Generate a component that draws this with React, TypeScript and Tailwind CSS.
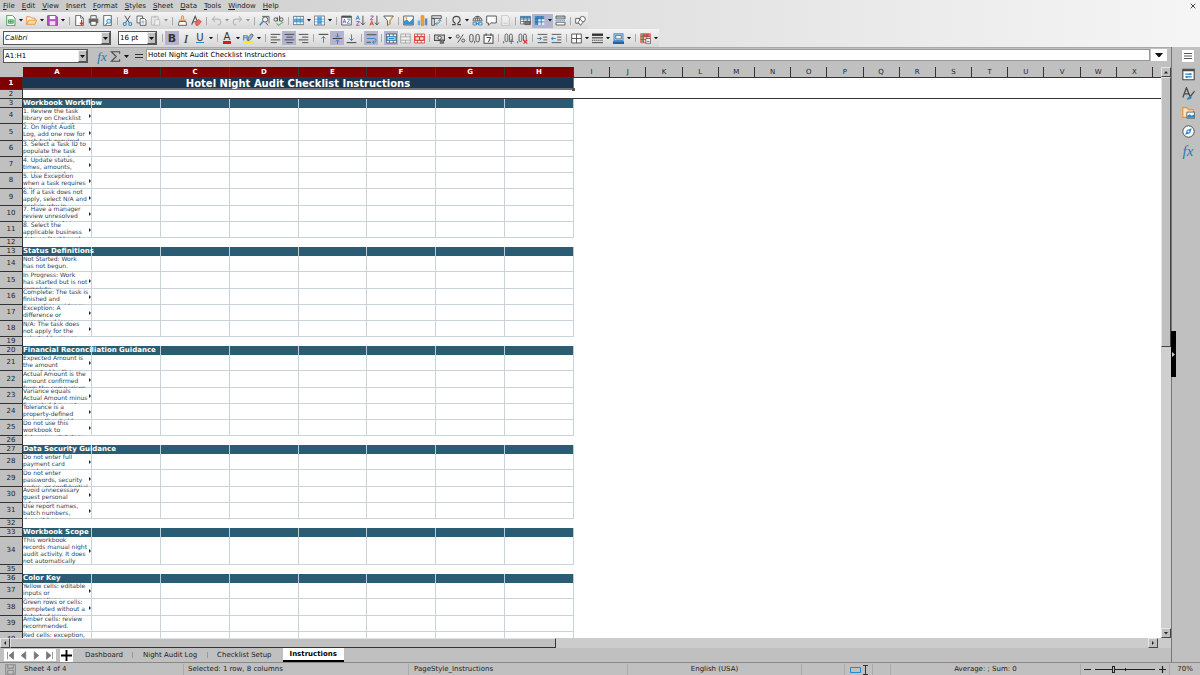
import { Fragment, useState, type ReactNode } from 'react';
import { clsx } from 'clsx';

const ink = '#4a4a4a';
const blue = '#2b88c8';
const red = '#d8322a';

const icons: Record<string, ReactNode> = {
  new: (
    <>
      <path d="M2.5.5h8l4 4v11h-12z" fill="#fff" stroke="#3f9b57" strokeWidth="1.4" />
      <path d="M5 7h7v5H5zM5 9.5h7M8.5 7v5" fill="#b8e6c1" stroke="#3f9b57" strokeWidth="1.2" />
    </>
  ),
  open: (
    <>
      <path d="M1 13.5v-11h5l2 2h5v3" fill="#fdf1df" stroke="#e8913a" strokeWidth="1.3" />
      <path d="M1 13.5l3-6h11.5l-2.5 6z" fill="#fbd9a6" stroke="#e8913a" strokeWidth="1.3" />
    </>
  ),
  save: (
    <>
      <path d="M1 1h12l2 2v12H1z" fill="#b658c4" stroke="#8d3a9c" strokeWidth="1.4" />
      <path d="M4 1.5h8V6H4z" fill="#fff" />
      <path d="M4 9h8v6H4z" fill="#f0dcf3" />
    </>
  ),
  pdf: (
    <>
      <path d="M2.5.5h7l4 4v11h-11z" fill="#fff" stroke={ink} strokeWidth="1.2" />
      <path d="M9.5.5v4h4" fill="none" stroke={ink} />
      <path d="M11 7v6M8.5 11l2.5 3 2.5-3" fill="none" stroke={red} strokeWidth="1.7" />
    </>
  ),
  print: (
    <>
      <path d="M4 5V1h8v4" fill="#fff" stroke={ink} strokeWidth="1.3" />
      <path d="M1 5h14v7H1z" fill="#6a6a6a" />
      <path d="M4 9h8v6H4z" fill="#fff" stroke={ink} strokeWidth="1.3" />
    </>
  ),
  preview: (
    <>
      <path d="M2.5.5h11v15h-11z" fill="#fff" stroke={ink} strokeWidth="1.2" />
      <circle cx="10" cy="9" r="3" fill="#d8ecf8" stroke={blue} strokeWidth="1.4" />
      <path d="M8 11.5l-3 3" stroke={blue} strokeWidth="1.6" />
    </>
  ),
  cut: (
    <>
      <path d="M4 1l6.5 10M12 1L5.5 11" stroke={ink} strokeWidth="1.4" />
      <circle cx="4" cy="13" r="2.2" fill="none" stroke={blue} strokeWidth="1.5" />
      <circle cx="12" cy="13" r="2.2" fill="none" stroke={blue} strokeWidth="1.5" />
    </>
  ),
  copy: (
    <>
      <path d="M1.5 1.5h8v10h-8z" fill="#fff" stroke={ink} strokeWidth="1.2" />
      <path d="M6 5h6l2.5 2.5V15H6z" fill="#fff" stroke={ink} strokeWidth="1.2" />
      <path d="M8 9h4M8 11.5h4" stroke={blue} />
    </>
  ),
  paste: (
    <>
      <path d="M2 2.5h10v12H2z" fill="#e8e8e8" stroke="#888" strokeWidth="1.2" />
      <path d="M5 1h4v3H5z" fill="#999" />
      <path d="M7 7h7v8H7z" fill="#fff" stroke="#888" />
    </>
  ),
  clone: (
    <>
      <path d="M6.5 6V2.5a1.5 1.5 0 013 0V6" fill="#f7d4a8" stroke="#c98542" strokeWidth="1.2" />
      <path d="M3 6.5h10V9H3z" fill="#e89b5a" />
      <path d="M3 9.5h10l1 5.5H2z" fill="#fff" stroke={ink} strokeWidth="1.2" />
    </>
  ),
  clear: (
    <>
      <path d="M1 14L6 2l4 9" fill="none" stroke={ink} strokeWidth="1.6" />
      <path d="M3 10h5" stroke={ink} strokeWidth="1.4" />
      <path d="M6.5 12L11 6.5l4 3-4.5 5.5h-3z" fill="#ef6a62" stroke={red} />
    </>
  ),
  undo: <path d="M6 2L2 6l4 4M2 6h8a4 4 0 010 8.5" fill="none" stroke="#8d8d8d" strokeWidth="1.5" />,
  redo: <path d="M10 2l4 4-4 4M14 6H6a4 4 0 000 8.5" fill="none" stroke="#8d8d8d" strokeWidth="1.5" />,
  find: (
    <>
      <path d="M4.5 2h10v10" fill="#fff" stroke={ink} strokeWidth="1.2" />
      <circle cx="9" cy="6.5" r="3.8" fill="#e6f2fa" stroke={ink} strokeWidth="1.3" />
      <path d="M6 9.5L1 15" stroke={blue} strokeWidth="2" />
      <path d="M10 11l3 4" stroke={ink} strokeWidth="1.3" />
    </>
  ),
  spell: (
    <>
      <circle cx="4" cy="6.5" r="2.5" fill="none" stroke={ink} strokeWidth="1.3" />
      <path d="M6.5 3.5V9M9.5 1v8" stroke={ink} strokeWidth="1.3" />
      <circle cx="12" cy="6.5" r="2.5" fill="none" stroke={ink} strokeWidth="1.3" />
      <path d="M5 12l3 3 7-5" fill="none" stroke="#4bb36a" strokeWidth="1.5" />
    </>
  ),
  rows: (
    <>
      <path d="M.5 2h15v12H.5z" fill="#fff" stroke={ink} />
      <path d="M1 6h14v4H1z" fill="#5fb2e6" />
      <path d="M.5 6h15M.5 10h15M5.5 2v12M10.5 2v12" stroke={blue} />
    </>
  ),
  cols: (
    <>
      <path d="M.5 1.5h15v13H.5z" fill="#fff" stroke={ink} />
      <path d="M5.5 2h5v12h-5z" fill="#5fb2e6" />
      <path d="M.5 6h15M.5 10h15M5.5 2v12M10.5 2v12" stroke={blue} />
    </>
  ),
  sort: (
    <>
      <path d="M1 1.5h14v13H1z" fill="#fff" stroke={ink} strokeWidth="1.2" />
      <path d="M1 1.5h14V4H1z" fill={ink} />
      <path d="M3 12l2-6 2 6M3.5 10h3" fill="none" stroke="#9e46b0" strokeWidth="1.2" />
      <path d="M9 6h4l-4 6h4" fill="none" stroke={blue} strokeWidth="1.2" />
    </>
  ),
  sortAsc: (
    <>
      <path d="M1.5 7L4 1l2.5 6M2.5 5h3" fill="none" stroke={blue} strokeWidth="1.3" />
      <path d="M2 9.5h4.5L2 15h4.5" fill="none" stroke="#9e46b0" strokeWidth="1.3" />
      <path d="M11.5 1v13M8.5 11l3 3.5 3-3.5" fill="none" stroke={ink} strokeWidth="1.3" />
    </>
  ),
  sortDesc: (
    <>
      <path d="M2 1.5h4.5L2 7h4.5" fill="none" stroke="#9e46b0" strokeWidth="1.3" />
      <path d="M1.5 15L4 9l2.5 6M2.5 13h3" fill="none" stroke={red} strokeWidth="1.3" />
      <path d="M11.5 1v13M8.5 11l3 3.5 3-3.5" fill="none" stroke={ink} strokeWidth="1.3" />
    </>
  ),
  filter: (
    <>
      <path d="M1 1.5h14L10 8v5l-3.5 2V8z" fill="#fff" stroke={ink} strokeWidth="1.3" />
      <path d="M14 3L9.5 8.5V13L7 14.5" fill="none" stroke="#ef9b3f" strokeWidth="2" />
    </>
  ),
  image: (
    <>
      <path d="M1 1.5h14v13H1z" fill="#fff" stroke={ink} strokeWidth="1.2" />
      <path d="M1.5 14V9l4-3 4 4 5-5v9z" fill="#3d8fca" />
      <circle cx="5" cy="4.5" r="1.5" fill="#f0a43c" />
    </>
  ),
  chart: (
    <>
      <path d="M1 8h3.5v7H1z" fill="#5fb2e6" />
      <path d="M6 1h4v14H6z" fill="#f0a43c" stroke="#d9822b" />
      <path d="M11.5 5H15v10h-3.5z" fill="#4d8fc4" />
    </>
  ),
  pivot: (
    <>
      <path d="M1 1h14v4H1zM1 5h4v10H1z" fill="#d8d8d8" stroke={ink} strokeWidth="1.2" />
      <path d="M7 13c4 0 6-2 6-6M10.5 9L13 6.5 15 9M9 10.5L6.5 13 9 15" fill="none" stroke={blue} strokeWidth="1.3" />
    </>
  ),
  omega: <path d="M1.5 14H6v-2C1 9.5 2 2 8 2s7 7.5 2 10v2h4.5" fill="none" stroke={ink} strokeWidth="1.5" />,
  link: (
    <>
      <path d="M1.5 8.5a6.5 6.5 0 0113 0z" fill="#fff" stroke={ink} strokeWidth="1.3" />
      <path d="M8 2v6.5M2.5 5.5h11M5 8c0-3 1-5 3-6 2 1 3 3 3 6" fill="none" stroke={ink} />
      <path d="M1.5 10.5h5v4h-5zM9.5 10.5h5v4h-5zM5 12.5h6" fill="none" stroke={blue} strokeWidth="1.3" />
    </>
  ),
  comment: <path d="M1 1.5h14v10H7L3.5 15v-3.5H1z" fill="#fff" stroke={ink} strokeWidth="1.3" />,
  header: (
    <>
      <path d="M2.5.5h8l3 3v12h-11z" fill="#f4f4f4" stroke="#999" strokeWidth="1.2" />
      <path d="M5 12h6" stroke="#999" />
    </>
  ),
  printArea: (
    <>
      <path d="M.5 2h15v11H.5zM.5 6h15M.5 9.5h15M5.5 2v11M10.5 2v11" fill="#fff" stroke={ink} />
      <path d="M.5 2h15v3H.5z" fill={blue} />
      <path d="M7 9h8v5H7z" fill="#777" stroke={ink} />
    </>
  ),
  freeze: (
    <>
      <path d="M1 1.5h14v13H1z" fill="#dfeefb" />
      <path d="M1 1.5h14v4H1zM1 1.5h4.5v13H1z" fill="#3d8fca" />
      <path d="M1 5.5h14M1 10h14M5.5 1.5v13M10.5 1.5v13" stroke="#2a5e94" />
    </>
  ),
  split: (
    <>
      <path d="M1.5 1.5h13v4h-13zM1.5 10.5h13v4h-13z" fill="#fff" stroke={ink} strokeWidth="1.2" />
      <path d="M1.5 3h13" stroke={ink} />
      <path d="M.5 8h15" stroke={blue} strokeDasharray="2 1" />
    </>
  ),
  shapes: (
    <>
      <path d="M1 5h6v7H1z" fill="#fff" stroke={ink} strokeWidth="1.2" />
      <circle cx="11" cy="6" r="4" fill="#fff" stroke={ink} strokeWidth="1.2" />
      <path d="M8 6.5l3.5 4L8 15l-3.5-4.5z" fill="#fff" stroke={ink} strokeWidth="1.2" />
    </>
  ),
  left: <path d="M1 2h14M1 6h9M1 10h14M1 14h9" stroke={ink} strokeWidth="1.4" />,
  center: <path d="M1 2h14M3.5 6h9M1 10h14M3.5 14h9" stroke={ink} strokeWidth="1.4" />,
  right: <path d="M1 2h14M6 6h9M1 10h14M6 14h9" stroke={ink} strokeWidth="1.4" />,
  top: (
    <>
      <path d="M1 2h14" stroke={ink} strokeWidth="1.6" />
      <path d="M8 14V5M5 8l3-3 3 3" fill="none" stroke={blue} strokeWidth="1.4" />
    </>
  ),
  middle: (
    <>
      <path d="M1 8h14" stroke={ink} strokeWidth="1.6" />
      <path d="M8 0v6M5.5 3.5L8 6l2.5-2.5M8 16v-6M5.5 12.5L8 10l2.5 2.5" fill="none" stroke={blue} strokeWidth="1.4" />
    </>
  ),
  bottom: (
    <>
      <path d="M1 14h14" stroke={ink} strokeWidth="1.6" />
      <path d="M8 2v9M5 8l3 3 3-3" fill="none" stroke={blue} strokeWidth="1.4" />
    </>
  ),
  wrap: (
    <>
      <path d="M1 2.5h14M1 13.5h6" stroke={ink} strokeWidth="1.4" />
      <path d="M1 8h11a2.7 2.7 0 010 5.5h-2M12 11l-2.5 2.5L12 16" fill="none" stroke={blue} strokeWidth="1.4" />
    </>
  ),
  merge: (
    <>
      <path d="M.5 1.5h15v13H.5zM.5 5.5h15M.5 10.5h15M5 1.5v4M10.5 1.5v4M5 10.5v4M10.5 10.5v4" fill="#fff" stroke={ink} strokeWidth="1.2" />
      <path d="M1.5 5.5h13v5h-13z" fill="#cfe8f8" stroke={blue} strokeWidth="1.5" />
      <path d="M4 8h8" stroke={blue} strokeWidth="1.5" />
    </>
  ),
  mergeCells: <path d="M1 1.5h14v13H1zM1 5.5h14M1 10.5h14M8 1.5v4M8 10.5v4" fill="#eee" stroke="#999" strokeWidth="1.1" />,
  unmerge: (
    <>
      <path d="M.5 1.5h15v13H.5zM.5 5.5h15M.5 10.5h15M5 1.5v4M10.5 1.5v4M5 10.5v4M10.5 10.5v4" fill="#fff" stroke={red} strokeWidth="1.2" />
      <path d="M1.5 5.5h13v5h-13zM8 5.5v5" fill="#fbd9d6" stroke={red} strokeWidth="1.5" />
    </>
  ),
  currency: (
    <>
      <path d="M.5 3h15v8H.5z" fill="#c9c9c9" stroke={ink} strokeWidth="1.5" />
      <circle cx="8" cy="7" r="2.5" fill="#eee" stroke={ink} strokeWidth="1.3" />
      <path d="M9 10h5v5H9z" fill="#777" stroke={ink} />
    </>
  ),
  percent: (
    <>
      <path d="M12 2L4 14" stroke={ink} strokeWidth="1.3" />
      <circle cx="4" cy="5" r="2.2" fill="none" stroke={ink} strokeWidth="1.3" />
      <circle cx="12" cy="11" r="2.2" fill="none" stroke={ink} strokeWidth="1.3" />
    </>
  ),
  number: (
    <>
      <rect x="1" y="2" width="5" height="11" rx="2.5" fill="none" stroke={ink} strokeWidth="1.3" />
      <rect x="10" y="2" width="5" height="11" rx="2.5" fill="none" stroke={ink} strokeWidth="1.3" />
      <path d="M8 12v3" stroke={ink} strokeWidth="1.3" />
    </>
  ),
  date: (
    <>
      <path d="M1.5 3h13v12h-13z" fill="#fff" stroke={ink} strokeWidth="1.5" />
      <path d="M4.5.5V4M11.5.5V4M5 6.5h6L8 13" fill="none" stroke={ink} strokeWidth="1.5" />
    </>
  ),
  addDecimal: (
    <>
      <path d="M1 12v3" stroke={ink} strokeWidth="1.3" />
      <rect x="3" y="1.5" width="4" height="11" rx="2" fill="none" stroke={ink} strokeWidth="1.2" />
      <rect x="9.5" y="1.5" width="4" height="11" rx="2" fill="none" stroke={ink} strokeWidth="1.2" />
      <path d="M12 9v7M8.5 12.5h7" stroke={blue} strokeWidth="1.5" />
    </>
  ),
  deleteDecimal: (
    <>
      <path d="M1 12v3" stroke={ink} strokeWidth="1.3" />
      <rect x="3" y="1.5" width="4" height="11" rx="2" fill="none" stroke={ink} strokeWidth="1.2" />
      <rect x="9.5" y="1.5" width="4" height="11" rx="2" fill="none" stroke={ink} strokeWidth="1.2" />
      <path d="M9.5 10l5.5 5.5M15 10l-5.5 5.5" stroke={red} strokeWidth="1.5" />
    </>
  ),
  indent: (
    <>
      <path d="M1 2h14M9 6h6M9 10h6M1 14h14" stroke={ink} strokeWidth="1.3" />
      <path d="M0 8h6.5M4 5.5L6.5 8 4 10.5" fill="none" stroke={blue} strokeWidth="1.4" />
    </>
  ),
  outdent: (
    <>
      <path d="M1 2h14M9 6h6M9 10h6M1 14h14" stroke={ink} strokeWidth="1.3" />
      <path d="M7 8H.5M3 5.5L.5 8 3 10.5" fill="none" stroke={blue} strokeWidth="1.4" />
    </>
  ),
  borders: <path d="M1 1.5h14v13H1zM8 1.5v13M1 8h14" fill="#fff" stroke={ink} strokeWidth="1.3" />,
  borderStyle: (
    <>
      <path d="M0 2.5h16" stroke="#333" strokeWidth="3.5" />
      <path d="M0 7h16" stroke={ink} strokeWidth="1.8" />
      <path d="M0 10.5h16" stroke={ink} strokeWidth="1.5" strokeDasharray="2 1" />
      <path d="M0 14h16" stroke={ink} strokeWidth="1.5" />
    </>
  ),
  borderColor: (
    <>
      <path d="M1.5 1h13v10h-13z" fill="#a9d3ef" stroke="#4d8fc4" strokeWidth="1.5" />
      <path d="M4 3.5h8v5H4z" fill="#eaf4fb" stroke={ink} />
      <path d="M0 12h16v4H0z" fill="#1f63a8" />
    </>
  ),
  conditional: (
    <>
      <path d="M1 1h14v13H1z" fill="#f7c9c5" stroke={red} />
      <path d="M1.5 1.5H5v12H1.5z" fill="#7ba86b" />
      <path d="M5 1.5h9v4H5z" fill="#e2554c" />
      <path d="M1 5h14M1 9.5h14M5 1v13M10 1v13" stroke="#8a4a46" />
      <path d="M8.5 8h7v7.5h-7z" fill="#eee" stroke={ink} />
      <path d="M10 12.5h4" stroke={ink} />
    </>
  ),
};

const Icon = ({ name }: { name: string }) => (
  <svg viewBox="0 0 16 16" className="size-[11px] shrink-0" aria-hidden="true">
    {icons[name]}
  </svg>
);

const Caret = ({ className = 'w-[5px]' }: { className?: string }) => (
  <svg viewBox="0 0 10 6" className={className} aria-hidden="true">
    <path d="M0 0h10L5 6z" fill="#111" />
  </svg>
);

const DIVIDER = '|';
const DROP = 'v';

const standardTools =
  'new v open v save v | pdf print preview | cut copy paste v | clone clear | undo v redo v | find spell | rows v cols v | sort sortAsc sortDesc filter | image chart pivot | omega v link comment header | printArea freeze v split | shapes'.split(' ');

const formatTools =
  '| bold italic underline v | fontColor v highlight v | left center right | top middle bottom | wrap | merge mergeCells unmerge | currency v percent number date | addDecimal deleteDecimal | indent outdent | borders v borderStyle v borderColor v | conditional v'.split(' ');

const pressed = ['bold', 'center', 'middle', 'wrap', 'merge', 'freeze'];
const disabled = ['paste', 'undo', 'redo', 'header'];

const textTools: Record<string, ReactNode> = {
  bold: <span className="text-[11px] font-bold text-[#333]">B</span>,
  italic: <span className="font-['Liberation_Serif',serif] text-[13px] italic text-[#333]">I</span>,
  underline: <span className="border-b border-[#2b88c8] text-[10px] leading-[9px] text-[#333]">U</span>,
  fontColor: <span className="border-b-[3px] border-[#c9211e] px-px text-[10px] leading-[8px] text-[#333]">A</span>,
  highlight: (
    <svg viewBox="0 0 16 16" className="size-[11px]" aria-hidden="true">
      <path d="M0 12h16v4H0z" fill="#ffe72e" />
      <path d="M1 11V4h5v7M2 7h3" fill="none" stroke={blue} strokeWidth="1.6" />
      <path d="M7 11l1-5 4-5 3 2-3 5-3 3z" fill="#8bb8dc" stroke={ink} />
    </svg>
  ),
};

const Tools = ({ items }: { items: string[] }) => (
  <div className="flex items-center" role="toolbar">
    {items.map((item, i) => {
      if (item === DIVIDER) {
        return <span key={i} className="flex w-1.5 justify-center"><span className="h-2 w-px bg-[#aaa]" /></span>;
      }
      if (item === DROP) {
        const prev = items[i - 1];
        return (
          <button key={i} aria-label={`${prev} options`} className={clsx('flex h-3.5 w-[7px] items-center justify-center', prev === 'freeze' && 'bg-[#b4b4d0]', disabled.includes(prev) && 'opacity-40')}>
            <Caret className="w-1" />
          </button>
        );
      }
      return (
        <button key={i} aria-label={item} className={clsx('flex h-3.5 w-3.5 items-center justify-center leading-none', pressed.includes(item) && 'bg-[#b4b4d0]', disabled.includes(item) && 'opacity-50')}>
          {textTools[item] ?? <Icon name={item} />}
        </button>
      );
    })}
  </div>
);

interface ComboProps {
  label: string;
  value: string;
  className: string;
  inputClass?: string;
}

const Combo = ({ label, value, className, inputClass }: ComboProps) => (
  <div className={clsx('flex h-3.5 shrink-0 border border-[#555] bg-white', className)}>
    <input aria-label={label} defaultValue={value} className={clsx('min-w-0 flex-1 px-px text-black outline-none', inputClass)} />
    <button aria-label={`${label} list`} className="flex w-[9px] items-center justify-center border border-[#eee] border-r-[#555] border-b-[#555] bg-[#c0c0c0]">
      <Caret />
    </button>
  </div>
);

const menus = ['File', 'Edit', 'View', 'Insert', 'Format', 'Styles', 'Sheet', 'Data', 'Tools', 'Window', 'Help'];

type Row = { n: number; kind: 'title' | 'gap' | 'band' | 'text'; h: string; text?: string; more?: boolean };

const S = 'h-[9px]';
const M = 'h-4';
const L = 'h-[17px]';

const gap = (n: number, h = S): Row => ({ n, kind: 'gap', h });
const band = (n: number, text: string): Row => ({ n, kind: 'band', h: S, text });
const note = (n: number, h: string, text: string, more = true): Row => ({ n, kind: 'text', h, text, more });

const rows: Row[] = [
  { n: 1, kind: 'title', h: 'h-3', text: 'Hotel Night Audit Checklist Instructions' },
  gap(2, 'h-2'),
  band(3, 'Workbook Workflow'),
  note(4, M, '1. Review the task\nlibrary on Checklist\nSetup and adjust'),
  note(5, L, '2. On Night Audit\nLog, add one row for\neach task required'),
  note(6, M, '3. Select a Task ID to\npopulate the task\ndescription and'),
  note(7, M, '4. Update status,\ntimes, amounts,\nevidence, and'),
  note(8, M, '5. Use Exception\nwhen a task requires\nfollow-up.'),
  note(9, L, '6. If a task does not\napply, select N/A and\nexplain why in'),
  note(10, M, '7. Have a manager\nreview unresolved\nitems and notes'),
  note(11, M, '8. Select the\napplicable business\ndate on Dashboard'),
  gap(12),
  band(13, 'Status Definitions'),
  note(14, M, 'Not Started: Work\nhas not begun.', false),
  note(15, L, 'In Progress: Work\nhas started but is not\ncomplete.'),
  note(16, M, 'Complete: The task is\nfinished and\nsupporting evidence'),
  note(17, M, 'Exception: A\ndifference or\nunresolved issue'),
  note(18, M, 'N/A: The task does\nnot apply for the\nselected business'),
  gap(19),
  band(20, 'Financial Reconciliation Guidance'),
  note(21, M, 'Expected Amount is\nthe amount\nexpected by the'),
  note(22, L, 'Actual Amount is the\namount confirmed\nfrom the comparison'),
  note(23, M, 'Variance equals\nActual Amount minus\nExpected Amount.'),
  note(24, M, 'Tolerance is a\nproperty-defined\nreview threshold'),
  note(25, M, 'Do not use this\nworkbook to\ndetermine statutory'),
  gap(26),
  band(27, 'Data Security Guidance'),
  note(28, M, 'Do not enter full\npayment card\nnumbers.'),
  note(29, L, 'Do not enter\npasswords, security\ncodes, or confidential'),
  note(30, M, 'Avoid unnecessary\nguest personal\ninformation.'),
  note(31, M, 'Use report names,\nbatch numbers,\ndeposit bag'),
  gap(32),
  band(33, 'Workbook Scope'),
  note(34, 'h-7', 'This workbook\nrecords manual night\naudit activity. It does\nnot automatically'),
  gap(35),
  band(36, 'Color Key'),
  note(37, M, 'Yellow cells: editable\ninputs or\nassumptions.'),
  note(38, L, 'Green rows or cells:\ncompleted without a\ndetected issue.'),
  note(39, M, 'Amber cells: review\nrecommended.', false),
  note(40, M, 'Red cells: exception,\nmissing item, or'),
];

const usedCols = ['A', 'B', 'C', 'D', 'E', 'F', 'G', 'H'];
const freeCols = 'IJKLMNOPQRSTUVWX'.split('');

const SheetRow = ({ row }: { row: Row }) => (
  <tr className={clsx(row.n === 2 && '[&>*]:border-b [&>*]:border-[#333]')}>
    <th scope="row" className="p-0 font-normal">
      <div className={clsx('flex items-center justify-center border-r border-b border-[#333]', row.h, row.n === 1 ? 'bg-[#800000] font-bold text-white' : 'bg-[#c0c0c0] text-[#222]', row.n === 2 && 'border-b-0')}>
        {row.n}
      </div>
    </th>
    {row.kind === 'title' && (
      <td colSpan={8} className="relative p-0">
        <div className={clsx('flex items-center justify-center border-r border-b-2 border-[#6e6e76] bg-[#1b3650] text-[10px] font-bold text-white', row.h)}>
          {row.text}
        </div>
        <span className="absolute -right-px -bottom-px size-[3px] bg-[#555]" />
      </td>
    )}
    {row.kind === 'gap' && <td colSpan={8} className="p-0" />}
    {row.kind === 'band' &&
      usedCols.map((col) => (
        <td key={col} className="border-r border-[#b9cdd6] bg-[#2a5d73] p-0 first-of-type:relative first-of-type:z-10">
          {col === 'A' && <div className={clsx('flex items-center whitespace-nowrap font-bold text-white', row.h)}>{row.text}</div>}
        </td>
      ))}
    {row.kind === 'text' &&
      usedCols.map((col) =>
        col === 'A' ? (
          <td key={col} className="relative p-0">
            {/* the bottom line is a shadow, so clipped text runs over it */}
            <div className={clsx('overflow-hidden border-r border-[#c9d3da] text-[6px] leading-[7px] whitespace-pre text-[#2f4258] shadow-[inset_0_-1px_#c9d3da]', row.h)}>
              <p className="-mt-px">{row.text}</p>
            </div>
            {row.more && (
              <svg viewBox="0 0 2 4" className="absolute top-1/2 right-px h-1 w-0.5 -translate-y-1/2" aria-hidden="true">
                <path d="M0 0l2 2-2 2z" fill="#222" />
              </svg>
            )}
          </td>
        ) : (
          <td key={col} className="border-r border-b border-[#c9d3da] p-0" />
        ),
      )}
    <td colSpan={17} className="p-0" />
  </tr>
);

const Sheet = () => (
  <div className="min-w-0 flex-1 overflow-hidden bg-white">
    <table className="w-full table-fixed border-separate border-spacing-0 text-[7px] leading-[9px]">
      <colgroup>
        <col className="w-[23px]" />
        {usedCols.map((col) => (
          <col key={col} className={col === 'E' ? 'w-[68px]' : 'w-[69px]'} />
        ))}
        {freeCols.map((col) => <col key={col} />)}
        <col className="w-2" />
      </colgroup>
      <thead>
        <tr className="bg-[#c0c0c0] [&>th]:h-[11px] [&>th]:border-b [&>th]:border-[#333] [&>th]:p-0">
          <th aria-label="Select all" />
          {usedCols.map((col) => (
            <th key={col} scope="col" className="border-r border-r-[#3a0c3a] bg-[#800000] font-bold text-white">{col}</th>
          ))}
          {freeCols.map((col) => (
            <th key={col} scope="col" className="border-r border-[#333] font-normal text-[#222]">{col}</th>
          ))}
          <th aria-hidden="true" />
        </tr>
      </thead>
      <tbody>
        {rows.map((row) => <SheetRow key={row.n} row={row} />)}
      </tbody>
    </table>
  </div>
);

const arrows = {
  up: 'M2 5.5h4L4 3z',
  down: 'M2 3h4L4 5.5z',
  left: 'M5 2v4L3 4z',
  right: 'M3 2v4l2-2z',
};

const ScrollButton = ({ dir }: { dir: keyof typeof arrows }) => (
  <button aria-label={`Scroll ${dir}`} className="size-2.5 shrink-0 border border-[#e6e6e6] border-r-[#444] border-b-[#444] bg-[#c0c0c0]">
    <svg viewBox="0 0 8 8" className="size-2"><path d={arrows[dir]} fill="#222" /></svg>
  </button>
);

const FormulaBar = () => (
  <div className="flex h-5 shrink-0 items-start border-t border-[#aaa] bg-[#c0c0c0] pt-px pl-[3px]">
    <Combo label="Name Box" value="A1:H1" className="w-[85px]" />
    <div className="flex h-3.5 items-center pl-1.5 leading-none">
      <button aria-label="Function Wizard" className="w-4 font-['Liberation_Serif',serif] text-[13px] italic text-[#2b78b8]">fx</button>
      <button aria-label="Select Function" className="w-3">
        <svg viewBox="0 0 16 16" className="size-[11px]"><path d="M14 4V1H2l7 7-7 7h12v-3" fill="none" stroke={ink} strokeWidth="1.6" /></svg>
      </button>
      <Caret className="ml-0.5 w-[5px]" />
      <button aria-label="Formula" className="ml-1.5">
        <svg viewBox="0 0 8 8" className="size-2"><path d="M0 2.5h8M0 5.5h8" stroke="#333" strokeWidth="1.2" /></svg>
      </button>
    </div>
    <input aria-label="Input line" defaultValue="Hotel Night Audit Checklist Instructions" className="ml-[3px] h-3 min-w-0 flex-1 border border-[#999] bg-white px-px text-black outline-none" />
    <button aria-label="Expand formula bar" className="mr-1 ml-px flex h-3 w-4 items-center justify-center bg-white">
      <Caret className="w-2" />
    </button>
  </div>
);

const SideBar = () => (
  <aside className="flex w-[29px] shrink-0 flex-col items-center gap-1.5 border-l border-[#777] bg-[#c0c0c0] pt-[3px] pl-1">
    <button aria-label="Sidebar settings" className="flex size-3 items-center justify-center bg-white">
      <svg viewBox="0 0 8 8" className="size-2"><path d="M0 1.5h8M0 4h8M0 6.5h8" stroke="#444" strokeWidth=".9" /></svg>
    </button>
    <button aria-label="Properties" className="size-[13px]">
      <svg viewBox="0 0 16 16">
        <path d="M1 1.5h14v13H1z" fill="#fff" stroke={ink} strokeWidth="1.4" />
        <path d="M1 1.5h14V4H1z" fill={ink} />
        <path d="M4 7.5h8M4 11h8" stroke={blue} strokeWidth="1.4" />
        <path d="M10 6v3M6 9.5v3" stroke={blue} strokeWidth="1.5" />
      </svg>
    </button>
    <button aria-label="Styles" className="size-[13px]">
      <svg viewBox="0 0 16 16">
        <path d="M1 13L5.5 1 10 12M2.5 8.5h6" fill="none" stroke={ink} strokeWidth="1.7" />
        <path d="M15.5 5L10 12" stroke={ink} strokeWidth="1.6" />
        <path d="M6 15c2 0 2-3 4-3s2 3-4 3z" fill={blue} stroke={blue} strokeWidth="1.5" />
      </svg>
    </button>
    <button aria-label="Gallery" className="size-[13px]">
      <svg viewBox="0 0 16 16">
        <path d="M1 14V2h5l2 2.5h6V14z" fill="#fde3bd" stroke="#e8913a" strokeWidth="1.4" />
        <path d="M6 7.5h9.5V15H6z" fill="#fff" stroke={ink} />
        <path d="M6.5 14.5V12l3-2 2.5 2 3-2v4.5z" fill={blue} />
      </svg>
    </button>
    <button aria-label="Navigator" className="size-[13px]">
      <svg viewBox="0 0 16 16">
        <circle cx="8" cy="8" r="7" fill="#fff" stroke={ink} strokeWidth="1.2" />
        <path d="M12 4l-2 6-6 2 2-6z" fill={blue} />
        <circle cx="8" cy="8" r="1.3" fill="#fff" />
      </svg>
    </button>
    <button aria-label="Functions" className="font-['Liberation_Serif',serif] text-[15px] leading-none italic text-[#2b78b8]">fx</button>
  </aside>
);

const tabs = ['Dashboard', 'Night Audit Log', 'Checklist Setup', 'Instructions'];

const navButtons = [
  { label: 'First sheet', d: 'M2 1v10M10 1v10L4 6z' },
  { label: 'Previous sheet', d: 'M9 1v10L3 6z' },
  { label: 'Next sheet', d: 'M3 1v10l6-5z' },
  { label: 'Last sheet', d: 'M10 1v10M2 1v10l6-5z' },
];

const SheetTabs = () => {
  const [active, setActive] = useState('Instructions');

  return (
    <div className="flex h-3.5 shrink-0 items-center bg-[#c0c0c0] pl-1">
      <div className="flex h-3 w-[52px] justify-between bg-white px-0.5">
        {navButtons.map(({ label, d }) => (
          <button key={label} aria-label={label} className="w-[9px]">
            <svg viewBox="0 0 12 12"><path d={d} fill="#777" stroke="#777" /></svg>
          </button>
        ))}
      </div>
      <button aria-label="Add sheet" className="ml-1 flex size-[13px] items-center justify-center bg-white">
        <svg viewBox="0 0 12 12" className="size-[11px]"><path d="M6 0v12M0 6h12" stroke="#000" strokeWidth="2" /></svg>
      </button>
      <div className="ml-[5px] flex h-full items-center" role="tablist">
        {tabs.map((tab, i) => (
          <Fragment key={tab}>
            {i > 0 && (
              <span className={clsx('flex justify-center', i < 3 ? 'w-1.5' : 'w-1')}>{i < 3 && <span className="h-1.5 w-px bg-[#999]" />}</span>
            )}
            <button
              role="tab"
              aria-selected={tab === active}
              onClick={() => setActive(tab)}
              className={clsx('h-3.5 px-[7px]', tab === active ? 'border-b-2 border-black bg-white font-bold text-black' : 'text-[#222]')}
            >
              {tab}
            </button>
          </Fragment>
        ))}
      </div>
    </div>
  );
};

const StatusBar = () => (
  <footer className="grid h-[13px] shrink-0 grid-cols-[183fr_225fr_219fr_174fr_43px_28px_18px_190fr_89px_31px] border-t border-[#888] bg-[#c0c0c0] pt-px text-[#222] [&>*]:flex [&>*]:items-center [&>*+*]:border-l [&>*+*]:border-[#aaa]">
    <div className="gap-2 pl-[5px]">
      <svg viewBox="0 0 16 16" className="size-[11px]" aria-hidden="true">
        <path d="M1 1h14v14H1zM4 1v5h8V1M4 15V9h8v6" fill="none" stroke="#888" strokeWidth="1.5" />
      </svg>
      Sheet 4 of 4
    </div>
    <div className="pl-1">Selected: 1 row, 8 columns</div>
    <div className="pl-[5px]">PageStyle_Instructions</div>
    <div className="justify-center">English (USA)</div>
    <div />
    <div className="justify-center gap-0.5">
      <svg viewBox="0 0 11 6" className="w-[11px]" aria-hidden="true"><path d="M.5.5h10v5H.5z" fill="none" stroke={blue} /></svg>
      <svg viewBox="0 0 5 10" className="w-[5px]" aria-hidden="true"><path d="M0 .5h5M0 9.5h5M2.5 0v10" stroke="#333" /></svg>
    </div>
    <div />
    <div className="justify-center">Average: ; Sum: 0</div>
    <div className="justify-center gap-1">
      <button aria-label="Zoom out"><svg viewBox="0 0 7 7" className="size-[7px]"><path d="M0 3.5h7" stroke="#222" /></svg></button>
      <div className="relative flex items-center">
        <input type="range" aria-label="Zoom" min={0} max={100} defaultValue={30} className="h-2 w-[60px] appearance-none bg-transparent [&::-webkit-slider-runnable-track]:h-px [&::-webkit-slider-runnable-track]:bg-[#222] [&::-webkit-slider-thumb]:-mt-[3px] [&::-webkit-slider-thumb]:h-[7px] [&::-webkit-slider-thumb]:w-[3px] [&::-webkit-slider-thumb]:appearance-none [&::-webkit-slider-thumb]:border [&::-webkit-slider-thumb]:border-[#222] [&::-webkit-slider-thumb]:bg-[#c0c0c0]" />
        <span className="absolute left-1/2 h-[3px] w-px bg-[#222]" />
      </div>
      <button aria-label="Zoom in"><svg viewBox="0 0 7 7" className="size-[7px]"><path d="M0 3.5h7M3.5 0v7" stroke="#222" strokeWidth="1.2" /></svg></button>
    </div>
    <div className="justify-center">70%</div>
  </footer>
);

export default function App() {
  return (
    <div className="flex h-screen flex-col overflow-hidden bg-[#c0c0c0] font-['DejaVu_Sans',sans-serif] text-[7px] leading-[9px]">
      <header className="shrink-0 bg-linear-to-r from-[#c8c8c8] via-[#e0e0e0] to-[#f5f5f5]">
        <nav className="flex h-3 items-center gap-[7px] pl-[3px] text-[#222]">
          {menus.map((m) => (
            <button key={m}>
              <span className="underline decoration-1 underline-offset-1">{m[0]}</span>{m.slice(1)}
            </button>
          ))}
          <button aria-label="Close document" className="mr-1 ml-auto">
            <svg viewBox="0 0 8 8" className="size-1.5"><path d="M1 1l6 6M7 1L1 7" stroke="#333" strokeWidth="1.2" /></svg>
          </button>
        </nav>
        <div className="flex h-[17px] w-fit items-center bg-linear-to-b from-[#f4f4f4] to-[#d6d6d6] pr-px pl-[3px]">
          <Tools items={standardTools} />
        </div>
        <div className="flex h-[18px] w-fit items-center bg-linear-to-b from-[#f4f4f4] to-[#d6d6d6] pl-[3px]">
          <Combo label="Font Name" value="Calibri" className="mr-[7px] w-[108px]" inputClass="italic" />
          <Combo label="Font Size" value="16 pt" className="mr-0.5 w-[39px]" />
          <Tools items={formatTools} />
        </div>
      </header>

      <main className="relative flex min-h-0 flex-1">
        <div className="flex min-w-0 flex-1 flex-col">
          <FormulaBar />
          <div className="flex min-h-0 flex-1">
            <Sheet />
            <div className="flex w-2.5 shrink-0 flex-col bg-[#cfcfcf]">
              <ScrollButton dir="up" />
              <div className="flex min-h-0 flex-1 flex-col">
                <div className="h-[49%] border border-[#e0e0e0] border-r-[#444] border-b-[#444] bg-[#c0c0c0]" />
              </div>
              <ScrollButton dir="down" />
            </div>
          </div>
          <div className="flex h-2.5 shrink-0 bg-[#cccccc] pr-[13px]">
            <ScrollButton dir="left" />
            <div className="min-w-0 flex-1">
              <div className="h-full w-[48%] border border-[#e0e0e0] border-r-[#333] border-b-[#333] bg-[#c0c0c0]" />
            </div>
            <ScrollButton dir="right" />
          </div>
          <SheetTabs />
        </div>
        <SideBar />
        <button aria-label="Hide sidebar" className="absolute top-[284px] right-6 flex h-[46px] w-[5px] items-center justify-center bg-black">
          <svg viewBox="0 0 3 5" className="h-[5px] w-[3px]"><path d="M0 0l3 2.5L0 5z" fill="#ccc" /></svg>
        </button>
      </main>

      <StatusBar />
    </div>
  );
}
